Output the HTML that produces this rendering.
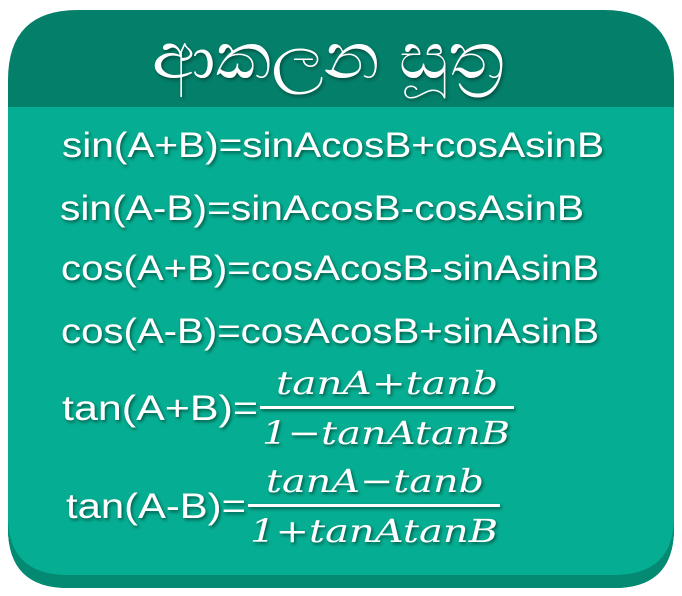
<!DOCTYPE html>
<html><head><meta charset="utf-8"><style>
html,body{margin:0;padding:0;background:#fff;width:682px;height:596px;overflow:hidden}
</style></head><body>
<svg width="682" height="596" viewBox="0 0 682 596" xmlns="http://www.w3.org/2000/svg">
<defs>
<filter id="sh" x="-10%" y="-20%" width="120%" height="140%"><feDropShadow dx="1.5" dy="2" stdDeviation="1.5" flood-color="#00352b" flood-opacity="0.7"/></filter>
<clipPath id="c"><path d="M78 10 H604 Q674 10 674 80 V528 Q674 588 614 588 H68 Q8 588 8 528 V80 Q8 10 78 10Z"/></clipPath>
</defs>
<g clip-path="url(#c)">
<rect x="0" y="0" width="682" height="596" fill="#037f6a"/>
<rect x="0" y="107" width="682" height="489" fill="#05ae92"/>
<path d="M8 520 Q10 575 68 575 H614 Q672 575 674 520 V596 H8Z" fill="#048a73"/>
</g>
<g font-family="'Liberation Sans','Noto Sans CJK SC',sans-serif" fill="#fff" filter="url(#sh)">
<text x="152" y="78" font-size="64" textLength="352" lengthAdjust="spacingAndGlyphs">ආකලන සූත්‍ර</text>
<g font-family="'Liberation Sans Narrow','Liberation Sans',sans-serif" font-size="35">
<text x="62" y="157" textLength="542" lengthAdjust="spacingAndGlyphs">sin(A+B)=sinAcosB+cosAsinB</text>
<text x="60" y="220" textLength="524" lengthAdjust="spacingAndGlyphs">sin(A-B)=sinAcosB-cosAsinB</text>
<text x="61" y="280" textLength="538" lengthAdjust="spacingAndGlyphs">cos(A+B)=cosAcosB-sinAsinB</text>
<text x="61" y="343" textLength="538" lengthAdjust="spacingAndGlyphs">cos(A-B)=cosAcosB+sinAsinB</text>
<text x="62" y="420" textLength="196" lengthAdjust="spacingAndGlyphs">tan(A+B)=</text>
<text x="66" y="518" textLength="180" lengthAdjust="spacingAndGlyphs">tan(A-B)=</text>
</g>
<g font-family="'DejaVu Serif','Liberation Serif',serif" font-style="italic" font-size="32">
<text x="276" y="394" textLength="222" lengthAdjust="spacingAndGlyphs">tanA+tanb</text>
<text x="262" y="444" textLength="248" lengthAdjust="spacingAndGlyphs">1−tanAtanB</text>
<text x="266" y="492" textLength="218" lengthAdjust="spacingAndGlyphs">tanA−tanb</text>
<text x="250" y="542" textLength="248" lengthAdjust="spacingAndGlyphs">1+tanAtanB</text>
</g>
<rect x="260" y="406" width="254" height="3"/>
<rect x="248" y="504" width="252" height="3"/>
</g>
</svg>
</body></html>
